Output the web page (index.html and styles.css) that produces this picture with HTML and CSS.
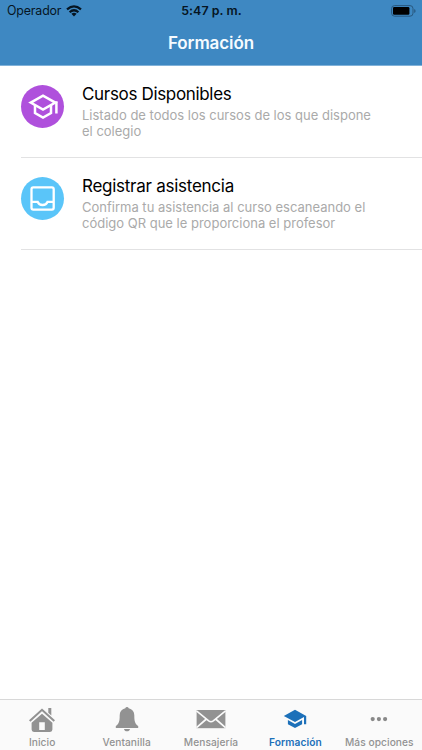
FILE: index.html
```html
<!DOCTYPE html>
<html lang="es">
<head>
<meta charset="utf-8">
<meta name="viewport" content="width=device-width, initial-scale=1">
<title>Formación</title>
<link rel="stylesheet" href="styles.css">
</head>
<body>
<div class="app">
  <header class="header">
    <div class="status">
      <div class="carrier"><span class="carrier-name">Operador</span>
        <svg class="wifi" viewBox="0 0 16 12"><g fill="none" stroke="#061522" stroke-width="2.2"><path d="M1 4.4Q8-1.8 15 4.4"/><path d="M3.6 7.2Q8 3.3 12.4 7.2"/></g><path fill="#061522" d="M5.4 8.8Q8 6.8 10.6 8.8L8 11.4Z"/></svg>
      </div>
      <span class="time">5:47 p. m.</span>
      <svg class="battery" viewBox="0 0 25 12"><rect x=".6" y=".6" width="21.4" height="10.6" rx="3" fill="none" stroke="#28587f" stroke-width="1"/><rect x="2" y="2" width="16.4" height="7.8" rx="1.2" fill="#000"/><path fill="#28587f" d="M23.2 4q1.4.5 1.4 2t-1.4 2z"/></svg>
    </div>
    <h1 class="title">Formación</h1>
  </header>
  <main class="list">
    <section class="row">
      <div class="avatar purple">
        <svg viewBox="0 0 43 43"><g fill="none" stroke="#fff" stroke-width="2.5"><path d="M9.7 17.6 22 10.600 34.300 17.600 22 24.600Z"/><path d="M14 20v8l8 4.500 8-4.500V20"/><path d="M34.300 17.600h1.100v10.800"/></g></svg>
      </div>
      <div class="copy">
        <h2 class="name tight">Cursos Disponibles</h2>
        <p class="desc">Listado de todos los cursos de los que dispone<br>el colegio</p>
      </div>
    </section>
    <section class="row">
      <div class="avatar blue">
        <svg viewBox="0 0 43 43"><rect x="10.5" y="10.4" width="22.2" height="22.2" rx="1.8" fill="none" stroke="#fff" stroke-width="2.3"/><path d="M10.5 24.8h6.2q1.2 3.2 4.9 3.2t4.9-3.2h6.2" fill="none" stroke="#fff" stroke-width="2.3"/></svg>
      </div>
      <div class="copy">
        <h2 class="name">Registrar asistencia</h2>
        <p class="desc">Confirma tu asistencia al curso escaneando el<br>código QR que le proporciona el profesor</p>
      </div>
    </section>
  </main>
  <nav class="tabs">
    <a class="tab">
      <svg class="icon" viewBox="0 0 28 28"><g fill="#929292"><path d="M20.3 3h3v7.600l-3-2.800z"/><path d="M3.600 17.800 14 8.800l10.400 9v6.800q0 2.400-2.400 2.400H6q-2.400 0-2.400-2.400zM11.200 17.200v7.800h5.600v-7.800z" fill-rule="evenodd"/></g><path d="M1.700 16 14 4.800 26.300 16" fill="none" stroke="#929292" stroke-width="2.100"/></svg>
      <span>Inicio</span>
    </a>
    <a class="tab">
      <svg class="icon" viewBox="0 0 28 28"><path fill="#929292" d="M12.300 3.200a1.800 1.800 0 0 1 3.400 0c3.600.8 5.600 3.300 5.600 7 0 6.300.7 8.300 3.900 10.800v1.900H2.800V21c3.200-2.500 3.900-4.500 3.900-10.800 0-3.700 2-6.200 5.600-7zM11 23.900h6c-.3 1.500-1.400 2.300-3 2.300s-2.700-.8-3-2.300z"/></svg>
      <span>Ventanilla</span>
    </a>
    <a class="tab">
      <svg class="icon mail" viewBox="0 0 30 28"><path fill="#929292" d="M.6 5h28.800v18.200H.6z"/><path fill="none" stroke="#fbfbfb" stroke-width="1.700" d="M.4 5.800 12.700 15.900q2.300 1.700 4.600 0L29.600 5.800M.5 22.700 10.400 14M29.500 22.700 19.600 14"/></svg>
      <span>Mensajería</span>
    </a>
    <a class="tab active">
      <svg class="icon" viewBox="0 0 28 28"><g fill="#1c70b9"><path d="M14 4.800 25.200 10.900v8.300H23v-7.100l-9 4.900-11.200-6.100z"/><path d="M6.900 15v4.200l7.100 3.900 7.100-3.900V15L14 18.900z"/></g></svg>
      <span>Formación</span>
    </a>
    <a class="tab more">
      <svg class="icon" viewBox="0 0 28 28"><g fill="#888"><circle cx="7.700" cy="14.100" r="2.100"/><circle cx="13.900" cy="14.100" r="2.100"/><circle cx="20.100" cy="14.100" r="2.100"/></g></svg>
      <span>Más opciones</span>
    </a>
  </nav>
</div>
</body>
</html>
```
FILE: styles.css
```css
* { box-sizing: border-box; }
body { margin: 0; background: #fff; font-family: Inter, "Liberation Sans", sans-serif; }
.app { width: 422px; height: 750px; display: flex; flex-direction: column; overflow: hidden; }
svg { display: block; flex: none; }
span { white-space: nowrap; }
.header { height: 66px; flex: none; background: #3e88c2; border-bottom: 1px solid #81b2d9; }
.status { height: 22px; display: grid; grid-template-columns: 1fr auto 1fr; align-items: center; padding: 0 6px 0 7px; color: #061522; font-size: 12.4px; line-height: 22px; }
.carrier { display: flex; align-items: center; gap: 5px; }
.carrier-name { letter-spacing: -.15px; }
.wifi { width: 16px; height: 12px; }
.time { font-weight: 600; letter-spacing: .05px; }
.battery { width: 25px; height: 12px; justify-self: end; }
.title { margin: 0; height: 43px; line-height: 43px; text-align: center; color: #f5fbff; font-size: 17px; font-weight: 600; letter-spacing: -.1px; }
.list { flex: 1; }
.row { height: 92px; margin-left: 20.5px; display: flex; border-bottom: 1px solid #e2e2e3; }
.avatar { width: 43px; height: 43px; border-radius: 50%; margin-top: 19px; flex: none; }
.avatar svg { width: 43px; height: 43px; }
.purple { background: #af50dc; }
.blue { background: #5ac5f9; }
.copy { margin-left: 18.5px; padding-top: 17px; }
.name { margin: 0; font-size: 17px; line-height: 23px; font-weight: 400; letter-spacing: -.26px; color: #000; }
.tight { letter-spacing: -.33px; }
.desc { margin: 1px 0 0; font-size: 13px; line-height: 16px; white-space: nowrap; color: #aaa; }
.tabs { height: 51px; flex: none; display: grid; grid-template-columns: repeat(5, 1fr); background: #fafafa; border-top: 1px solid #d8d8d8; color: #929292; font-size: 10.2px; font-weight: 500; }
.tab { display: flex; flex-direction: column; align-items: center; padding-top: 5px; }
.icon { width: 28px; height: 28px; }
.mail { width: 30px; }
.tab span { line-height: 14px; margin-top: 2px; letter-spacing: .07px; }
.active { color: #1c70b9; }
.tab.active span { font-weight: 600; letter-spacing: .1px; }
.more { padding-right: 1px; }
```
